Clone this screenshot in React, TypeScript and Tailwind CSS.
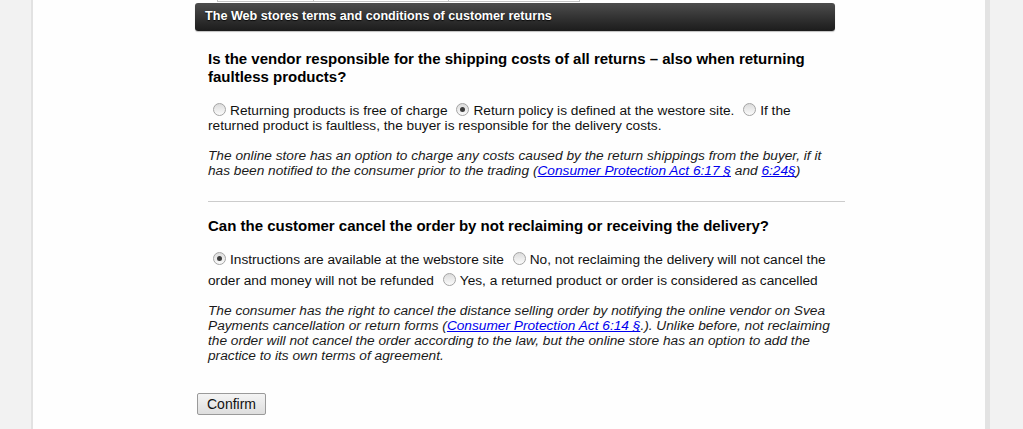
import React from "react";

function Radio({ checked = false }: { checked?: boolean }) {
  return (
    <span className="relative inline-block w-[13px] h-[13px] rounded-full border border-[#a4a4a4] bg-gradient-to-b from-[#dcdcdc] to-[#fbfbfb] ml-[5px] mr-[4px] mt-[6px] align-[-1px]">
      {checked && (
        <span className="absolute left-[3px] top-[3px] w-[5px] h-[5px] rounded-full bg-[#3c3c3c]" />
      )}
    </span>
  );
}

function A({ children }: { children: React.ReactNode }) {
  return <a href="#" className="text-[#0000ee] underline">{children}</a>;
}

export default function App() {
  return (
    <div className="w-[1023px] h-[429px] overflow-hidden bg-[#f2f2f2] font-['Liberation_Sans',Arial,sans-serif] text-[#111]">
      <div className="ml-[31px] w-[959px] h-[429px] bg-[#fefefe] border-l-2 border-l-[#e2e2e2] border-r-[5px] border-r-[#e3e3e3]">
        <div className="pl-[162px]">
          {/* remnant of table above */}
          <div className="ml-[22px] w-[363px] h-[2px] flex border-x border-b border-[#c4c4c4]">
            <div className="w-[96px] border-r border-[#c4c4c4]" />
            <div className="w-[135px] border-r border-[#c4c4c4]" />
            <div className="flex-1" />
          </div>
          <div className="mt-[1px] w-[640px] h-[28px] rounded-[3px] bg-gradient-to-b from-[#4d4d4d] to-[#1c1c1c] shadow-[0_1px_1px_rgba(0,0,0,0.25)] flex items-center pl-[10px]">
            <span className="text-white font-bold text-[12.6px] -mt-[2px] [text-shadow:0_1px_1px_rgba(0,0,0,0.8)]">
              The Web stores terms and conditions of customer returns
            </span>
          </div>

          <div className="pl-[13px] w-[650px]">
            <h2 className="mt-[19px] text-[15px] leading-[18px] font-bold text-black">
              Is the vendor responsible for the shipping costs of all returns – also when returning faultless products?
            </h2>
            <p className="mt-[11px] text-[13.7px] leading-[15px] text-[#111]">
              <Radio />Returning products is free of charge <Radio checked />Return policy is defined at the westore site. <Radio />If the returned product is faultless, the buyer is responsible for the delivery costs.
            </p>
            <p className="mt-[15px] text-[13.7px] leading-[15px] italic text-[#1a1a1a]">
              The online store has an option to charge any costs caused by the return shippings from the buyer, if it has been notified to the consumer prior to the trading (<A>Consumer Protection Act 6:17 §</A> and <A>6:24§</A>)
            </p>
            <div className="mt-[23px] h-px w-[637px] bg-[#cccccc]" />
            <h2 className="mt-[15px] text-[15px] leading-[18px] font-bold text-black">
              Can the customer cancel the order by not reclaiming or receiving the delivery?
            </h2>
            <p className="mt-[11px] text-[13.7px] leading-[15px] text-[#111]">
              <Radio checked />Instructions are available at the webstore site <Radio />No, not reclaiming the delivery will not cancel the order and money will not be refunded <Radio />Yes, a returned product or order is considered as cancelled
            </p>
            <p className="mt-[15px] text-[13.7px] leading-[15px] italic text-[#1a1a1a]">
              The consumer has the right to cancel the distance selling order by notifying the online vendor on Svea Payments cancellation or return forms (<A>Consumer Protection Act 6:14 §</A>.). Unlike before, not reclaiming the order will not cancel the order according to the law, but the online store has an option to add the practice to its own terms of agreement.
            </p>
          </div>
          <button className="mt-[30px] ml-[2px] h-[22px] w-[69px] border border-[#9a9a9a] rounded-[2px] bg-gradient-to-b from-[#f4f4f4] to-[#dedede] text-[14px] text-[#111] leading-none">
            Confirm
          </button>
        </div>
      </div>
    </div>
  );
}
